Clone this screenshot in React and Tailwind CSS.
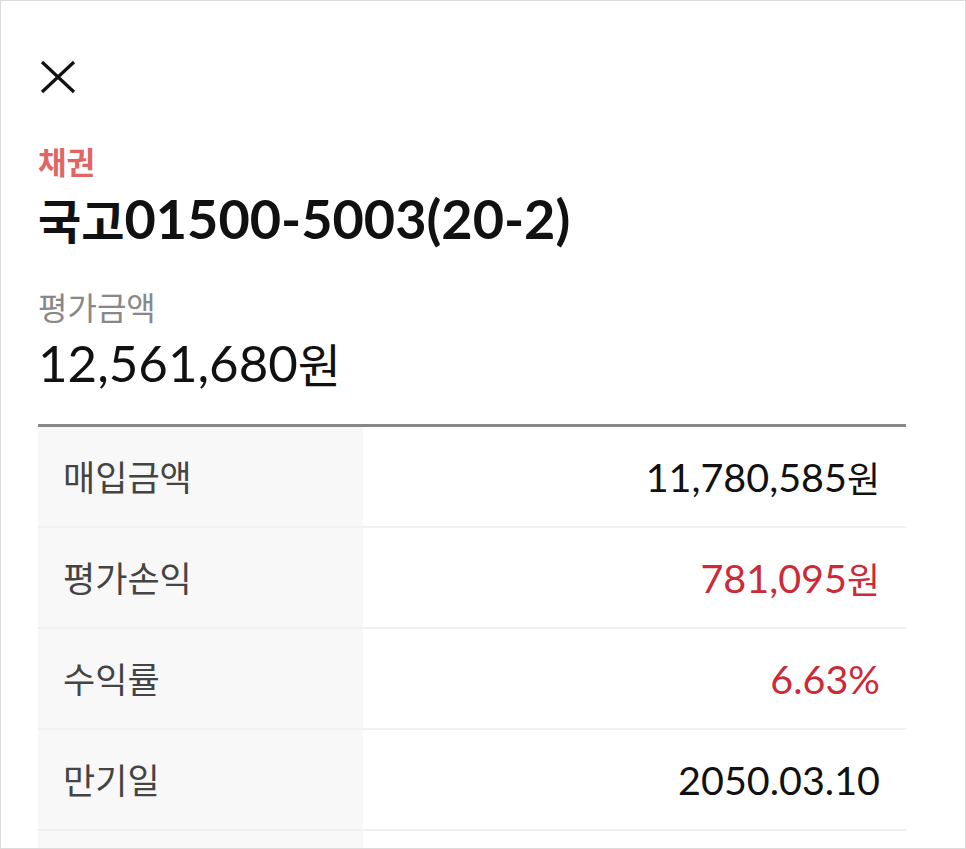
import React from "react";

const rows = [
  { label: "매입금액", num: "11,780,585", unit: "원", red: false },
  { label: "평가손익", num: "781,095", unit: "원", red: true },
  { label: "수익률", num: "6.63%", unit: "", red: true },
  { label: "만기일", num: "2050.03.10", unit: "", red: false },
];

const KR = '"Noto Sans CJK KR", "Noto Sans", sans-serif';
const LATO = 'Lato, "Noto Sans CJK KR", sans-serif';

export default function App() {
  return (
    <div className="h-[849px] w-[966px] overflow-hidden border border-[#dcdcdc] bg-white">
      <div className="pl-[37px] pr-[59px]">
        <div className="pt-[59px]">
          <svg width="36" height="34" viewBox="0 0 36 34" className="block ml-[2px]">
            <path d="M2 2 L34 32 M34 2 L2 32" stroke="#111" strokeWidth="3.2" fill="none" />
          </svg>
        </div>
        <div
          className="mt-[47px] flex h-[40px] items-center text-[31px] font-bold text-[#e06666]"
          style={{ fontFamily: KR }}
        >
          채권
        </div>
        <div className="mt-[8px] flex h-[60px] items-center font-bold text-[#111]">
          <span className="text-[47px] leading-[60px]" style={{ fontFamily: KR }}>국고</span>
          <span className="text-[54px] leading-[60px]" style={{ fontFamily: LATO }}>01500-5003(20-2)</span>
        </div>
        <div
          className="mt-[37px] flex h-[40px] items-center text-[32px] text-[#888]"
          style={{ fontFamily: KR }}
        >
          평가금액
        </div>
        <div className="mt-[7px] flex h-[60px] items-center text-[#111]">
          <span className="text-[51px] leading-[60px]" style={{ fontFamily: LATO }}>12,561,680</span>
          <span className="text-[47px] leading-[60px]" style={{ fontFamily: KR }}>원</span>
        </div>
        <div className="mt-[31px] border-t-[3px] border-[#888]">
          {rows.map((r) => (
            <div key={r.label} className="flex h-[101px] border-b-2 border-[#f0f0f0]">
              <div
                className="flex w-[325px] items-center bg-[#f8f8f8] pl-[25px] text-[35px] text-[#444]"
                style={{ fontFamily: KR }}
              >
                {r.label}
              </div>
              <div
                className={
                  "flex flex-1 items-center justify-end pr-[26px] " +
                  (r.red ? "text-[#cc2a36]" : "text-[#111]")
                }
              >
                <span className="text-[39.5px]" style={{ fontFamily: LATO }}>{r.num}</span>
                {r.unit ? (
                  <span className="text-[36px]" style={{ fontFamily: KR }}>{r.unit}</span>
                ) : null}
              </div>
            </div>
          ))}
          <div className="flex h-[101px]">
            <div className="w-[325px] bg-[#f8f8f8]" />
            <div className="flex-1" />
          </div>
        </div>
      </div>
    </div>
  );
}
